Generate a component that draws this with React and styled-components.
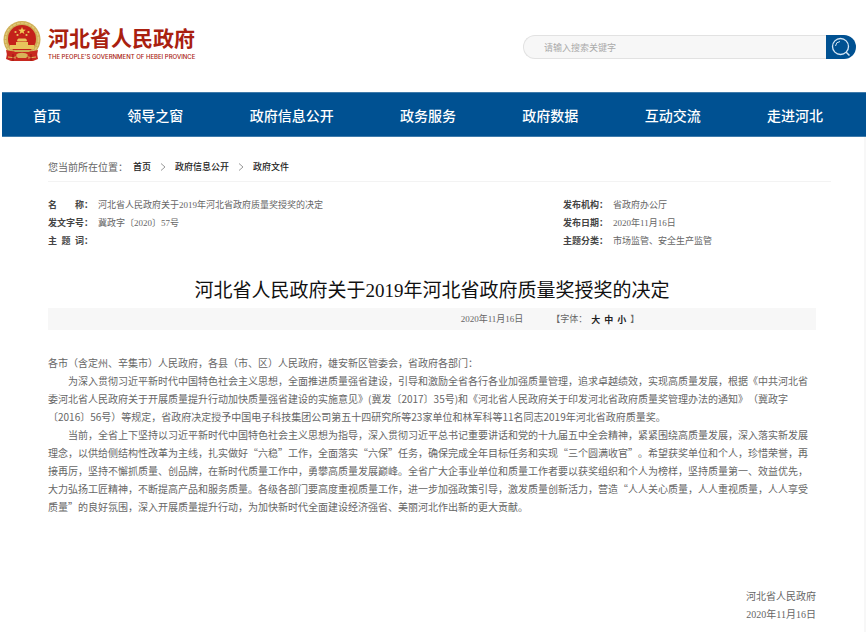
import React, { useState } from "react";
import styled, { createGlobalStyle } from "styled-components";

const navItems = [
  "首页",
  "领导之窗",
  "政府信息公开",
  "政务服务",
  "政府数据",
  "互动交流",
  "走进河北",
];

const crumbs = ["首页", "政府信息公开", "政府文件"];

const metaLeft = [
  { label: "名\u3000\u3000称：", value: "河北省人民政府关于2019年河北省政府质量奖授奖的决定" },
  { label: "发文字号：", value: "冀政字〔2020〕57号" },
  { label: "主\u2002题\u2002词：", value: "" },
];

const metaRight = [
  { label: "发布机构：", value: "省政府办公厅" },
  { label: "发布日期：", value: "2020年11月16日" },
  { label: "主题分类：", value: "市场监管、安全生产监管" },
];

const fontSizes = ["大", "中", "小"];

const Emblem = () => (
  <svg width="38" height="42" viewBox="0 0 38 42" aria-hidden="true">
    <path d="M5 27 H33 L35 38 L30 40 H8 L3 38 Z" fill="#c8281f" />
    <circle cx="19" cy="18.5" r="18.5" fill="#cfae55" />
    <circle cx="19" cy="18.5" r="16.5" fill="none" stroke="#dfc878" strokeWidth="1.5" strokeDasharray="3 1" />
    <circle cx="19" cy="18" r="14" fill="#c4211a" />
    <path
      d="M19 6 L20 8.6 L22.8 8.7 L20.6 10.4 L21.4 13 L19 11.5 L16.6 13 L17.4 10.4 L15.2 8.7 L18 8.6 Z"
      fill="#f0ca55"
    />
    <g fill="#e8c45c">
      <circle cx="12.5" cy="11" r="1.1" />
      <circle cx="25.5" cy="11" r="1.1" />
      <circle cx="14.5" cy="14" r="1.1" />
      <circle cx="23.5" cy="14" r="1.1" />
      <path d="M14 19 L15.5 17.5 H22.5 L24 19 L23.5 20.5 H14.5 Z" />
      <path d="M13 21 H25 V24 H13 Z" />
      <path d="M7 24 H31 V28 H7 Z" />
    </g>
    <path d="M3 29 C10 31 28 31 35 29 L34 34 C28 36 10 36 4 34 Z" fill="#c8281f" />
    <path d="M10 29 H28 L26 31 H12 Z" fill="#cfae55" />
    <path d="M13 34 C15 31 23 31 25 34 L23 37 H15 Z" fill="#d8b258" />
    <path d="M5 36 L13 37 M33 36 L25 37" stroke="#e0b95c" strokeWidth="1" fill="none" />
    <path d="M10 33 V40 M28 33 V40" stroke="#98180f" strokeWidth="1" />
  </svg>
);

const SearchIcon = () => (
  <svg width="20" height="20" viewBox="0 0 20 20" fill="none" stroke="#d5e6f5" aria-hidden="true">
    <circle cx="9.5" cy="9.5" r="8" strokeWidth="1.3" />
    <path d="M15 15 L18.5 18.5" strokeWidth="1.5" />
    <path d="M4.5 9 A5 5 0 0 1 9 4.5" strokeWidth="1" />
  </svg>
);

const MetaList = ({ items }) => (
  <MetaColumn>
    {items.map((item) => (
      <MetaRow key={item.label}>
        <dt>{item.label}</dt>
        <dd>{item.value}</dd>
      </MetaRow>
    ))}
  </MetaColumn>
);

export default function App() {
  const [keyword, setKeyword] = useState("");
  return (
    <Page>
      <GlobalStyle />
      <Header>
        <Logo href="#">
          <Emblem />
          <LogoText>
            <strong>河北省人民政府</strong>
            <span>THE PEOPLE'S GOVERNMENT OF HEBEI PROVINCE</span>
          </LogoText>
        </Logo>
        <SearchForm onSubmit={(e) => e.preventDefault()}>
          <input
            type="text"
            aria-label="搜索"
            placeholder="请输入搜索关键字"
            value={keyword}
            onChange={(e) => setKeyword(e.target.value)}
          />
          <button type="submit" aria-label="搜索">
            <SearchIcon />
          </button>
        </SearchForm>
      </Header>
      <Nav>
        {navItems.map((item) => (
          <a href="#" key={item}>
            {item}
          </a>
        ))}
      </Nav>
      <Content>
        <Breadcrumb>
          <span>您当前所在位置：</span>
          {crumbs.map((crumb, i) => (
            <React.Fragment key={crumb}>
              {i > 0 && <Arrow viewBox="0 0 6 8"><path d="M1 0.5 L5 4 L1 7.5" /></Arrow>}
              <a href="#">{crumb}</a>
            </React.Fragment>
          ))}
        </Breadcrumb>
        <Document>
          <Meta>
            <MetaList items={metaLeft} />
            <MetaList items={metaRight} />
          </Meta>
          <Title>河北省人民政府关于2019年河北省政府质量奖授奖的决定</Title>
          <InfoBar>
            <span>2020年11月16日</span>
            <FontPicker>
              <span>【字体：</span>
              {fontSizes.map((size) => (
                <button type="button" key={size}>
                  {size}
                </button>
              ))}
              <span>】</span>
            </FontPicker>
          </InfoBar>
          <Article>
            <p>各市（含定州、辛集市）人民政府，各县（市、区）人民政府，雄安新区管委会，省政府各部门：</p>
            <Paragraph>
              为深入贯彻习近平新时代中国特色社会主义思想，全面推进质量强省建设，引导和激励全省各行各业加强质量管理，追求卓越绩效，实现高质量发展，根据《中共河北省
              <br />
              委河北省人民政府关于开展质量提升行动加快质量强省建设的实施意见》(冀发〔2017〕35号)和《河北省人民政府关于印发河北省政府质量奖管理办法的通知》（冀政字
              <br />
              〔2016〕56号）等规定，省政府决定授予中国电子科技集团公司第五十四研究所等23家单位和林军科等11名同志2019年河北省政府质量奖。
            </Paragraph>
            <Paragraph>
              当前，全省上下坚持以习近平新时代中国特色社会主义思想为指导，深入贯彻习近平总书记重要讲话和党的十九届五中全会精神，紧紧围绕高质量发展，深入落实新发展
              <br />
              理念，以供给侧结构性改革为主线，扎实做好“六稳”工作，全面落实“六保”任务，确保完成全年目标任务和实现“三个圆满收官”。希望获奖单位和个人，珍惜荣誉，再
              <br />
              接再厉，坚持不懈抓质量、创品牌，在新时代质量工作中，勇攀高质量发展巅峰。全省广大企事业单位和质量工作者要以获奖组织和个人为榜样，坚持质量第一、效益优先，
              <br />
              大力弘扬工匠精神，不断提高产品和服务质量。各级各部门要高度重视质量工作，进一步加强政策引导，激发质量创新活力，营造“人人关心质量，人人重视质量，人人享受
              <br />
              质量”的良好氛围，深入开展质量提升行动，为加快新时代全面建设经济强省、美丽河北作出新的更大贡献。
            </Paragraph>
            <Signature>
              <p>河北省人民政府</p>
              <p>2020年11月16日</p>
            </Signature>
          </Article>
        </Document>
      </Content>
    </Page>
  );
}

const songFont = `"Liberation Serif", "Noto Sans CJK SC", serif`;

const GlobalStyle = createGlobalStyle`
  * {
    box-sizing: border-box;
  }
  body {
    margin: 0;
    background: #fff;
    color: #666;
    font-family: "Noto Sans CJK SC", sans-serif;
    font-size: 10px;
    line-height: 18px;
    text-spacing-trim: space-all;
  }
  p, dl, dd, h1 {
    margin: 0;
  }
  a {
    text-decoration: none;
  }
  button {
    border: none;
    padding: 0;
    background: none;
    font-family: inherit;
    cursor: pointer;
  }
`;

const Page = styled.div`
  padding: 0 2px 3px;
`;

const Header = styled.header`
  display: flex;
  justify-content: space-between;
  align-items: center;
  height: 92px;
  padding: 0 10px 0 1px;
`;

const Logo = styled.a`
  display: flex;
  align-items: center;
  gap: 7px;
  padding-bottom: 8px;
  color: #a9200f;
`;

const LogoText = styled.span`
  display: flex;
  flex-direction: column;
  padding-top: 2px;
  white-space: nowrap;
  strong {
    font-size: 21px;
    line-height: 28px;
  }
  span {
    font-family: Inter, sans-serif;
    font-size: 6px;
    font-weight: 500;
    line-height: 12px;
  }
`;

const SearchForm = styled.form`
  display: flex;
  width: 333px;
  height: 24px;
  margin-top: 2px;
  input {
    flex: 1;
    min-width: 0;
    padding: 0 20px;
    border: 1px solid #e2e2e2;
    border-right: none;
    border-radius: 12px 0 0 12px;
    background: #f7f7f7;
    font-family: inherit;
    font-size: 9px;
    outline: none;
  }
  input::placeholder {
    color: #aaa;
  }
  button {
    display: flex;
    align-items: center;
    justify-content: center;
    width: 30px;
    border-radius: 0 12px 12px 0;
    background: #005192;
  }
`;

const Nav = styled.nav`
  display: flex;
  justify-content: space-between;
  align-items: center;
  height: 45px;
  padding: 0 43px 0 31px;
  border: solid #3f7bab;
  border-width: 1px 0;
  background: #005192;
  a {
    color: #fff;
    font-size: 14px;
    font-weight: 500;
    white-space: nowrap;
  }
`;

const Content = styled.main`
  padding: 18px 33px 8px 46px;
  border-right: 2px solid #f7f7f7;
`;

const Document = styled.div`
  padding-right: 15px;
`;

const Breadcrumb = styled.div`
  display: flex;
  align-items: center;
  height: 27px;
  padding-bottom: 2px;
  border-bottom: 1px solid #f3f3f3;
  span {
    margin-right: 5px;
  }
  a {
    color: #222;
    font-size: 9px;
    font-weight: 500;
  }
`;

const Arrow = styled.svg`
  width: 6px;
  height: 8px;
  margin: 0 9px;
  fill: none;
  stroke: #999;
`;

const Meta = styled.div`
  display: grid;
  grid-template-columns: 1fr 253px;
  padding-top: 14px;
  font-family: ${songFont};
  font-size: 9px;
`;

const MetaColumn = styled.dl`
  display: flex;
  flex-direction: column;
`;

const MetaRow = styled.div`
  display: flex;
  height: 18px;
  dt {
    width: 50px;
    color: #444;
    font-weight: bold;
  }
`;

const Title = styled.h1`
  padding: 26px 0 3px;
  color: #111;
  font-family: ${songFont};
  font-size: 19px;
  font-weight: normal;
  line-height: 29px;
  text-align: center;
`;

const InfoBar = styled.div`
  display: flex;
  justify-content: flex-end;
  align-items: center;
  gap: 28px;
  height: 22px;
  padding-right: 23%;
  background: #f7f7f7;
  font-family: ${songFont};
  font-size: 9px;
`;

const FontPicker = styled.div`
  display: flex;
  align-items: center;
  gap: 4px;
  button {
    color: #222;
    font-size: 9px;
    font-weight: bold;
  }
`;

const Article = styled.article`
  padding-top: 24px;
  white-space: nowrap;
`;

const Paragraph = styled.p`
  text-indent: 2em;
`;

const Signature = styled.div`
  display: flex;
  flex-direction: column;
  align-items: flex-end;
  padding-top: 72px;
  font-family: ${songFont};
`;
